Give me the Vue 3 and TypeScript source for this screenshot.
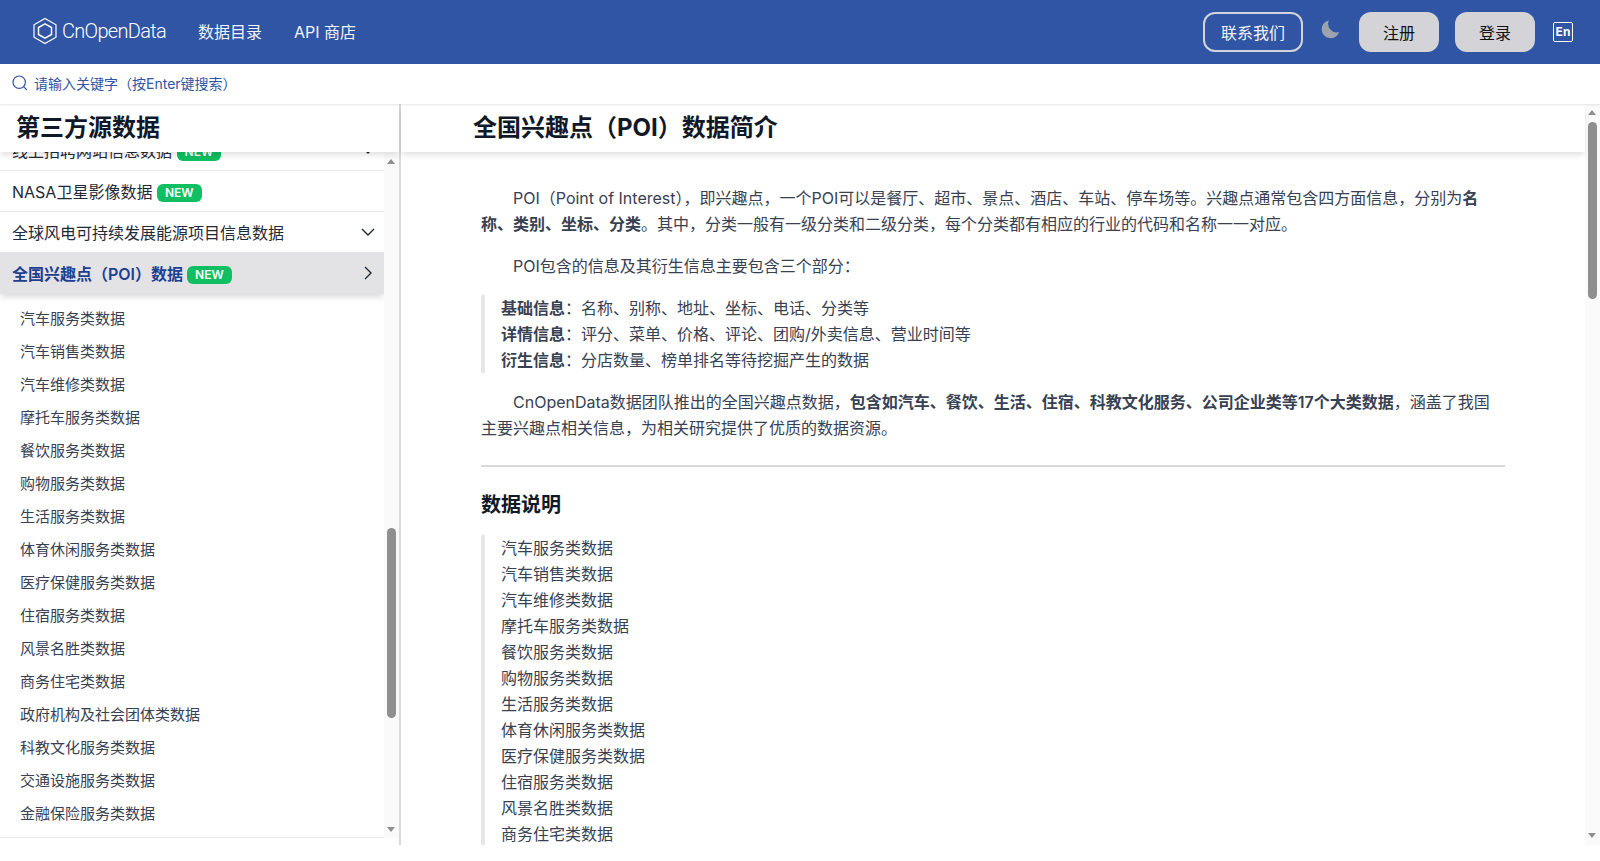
<script setup lang="ts">
const subItems: string[] = [
  '汽车服务类数据', '汽车销售类数据', '汽车维修类数据', '摩托车服务类数据',
  '餐饮服务类数据', '购物服务类数据', '生活服务类数据', '体育休闲服务类数据',
  '医疗保健服务类数据', '住宿服务类数据', '风景名胜类数据', '商务住宅类数据',
  '政府机构及社会团体类数据', '科教文化服务类数据', '交通设施服务类数据', '金融保险服务类数据',
];
const dataList: string[] = subItems.slice(0, 12);
</script>

<template>
  <div class="page">
    <header class="topbar">
      <div class="left">
        <a class="logo">
          <svg viewBox="0 0 24 28" width="24" height="28" fill="none" stroke="currentColor" stroke-width="1.2">
            <path d="M12 1.5 23 7.8v12.4L12 26.5 1 20.2V7.8Z" />
            <path d="M12 6.8 18.5 10.5v7L12 21.2 5.5 17.5v-7Z" stroke-width="1.5" />
          </svg>
          <span>CnOpenData</span>
        </a>
        <a class="nav">数据目录</a>
        <a class="nav">API 商店</a>
      </div>
      <div class="right">
        <button class="contact">联系我们</button>
        <svg class="moon" viewBox="0 0 20 20" width="20" height="20">
          <path fill="#9ca3af" d="M18.2 13.1A8.6 8.6 0 0 1 7.9 1.4a9 9 0 1 0 10.3 11.7Z" />
        </svg>
        <button class="grey">注册</button>
        <button class="grey">登录</button>
        <span class="lang">En</span>
      </div>
    </header>

    <div class="search">
      <svg viewBox="0 0 16 16" width="16" height="16" fill="none" stroke="#2f55a4" stroke-width="1.2" stroke-linecap="round">
        <circle cx="7.2" cy="7.2" r="6.2" />
        <path d="m11.8 11.8 2.8 2.8" />
      </svg>
      <span>请输入关键字（按Enter键搜索）</span>
    </div>

    <div class="body">
      <aside class="side">
        <h2 class="side-title">第三方源数据</h2>
        <div class="side-scroll">
          <ul class="menu">
            <li class="row">
              <span class="label">线上招聘网站信息数据 <em class="tag">NEW</em></span>
              <svg class="chev" viewBox="0 0 16 16" width="16" height="16"><path d="m2 5 6 6 6-6" /></svg>
            </li>
            <li class="row">
              <span class="label">NASA卫星影像数据 <em class="tag">NEW</em></span>
            </li>
            <li class="row">
              <span class="label">全球风电可持续发展能源项目信息数据</span>
              <svg class="chev" viewBox="0 0 16 16" width="16" height="16"><path d="m2 5 6 6 6-6" /></svg>
            </li>
            <li class="row active">
              <span class="label">全国兴趣点（POI）数据 <em class="tag">NEW</em></span>
              <svg class="chev" viewBox="0 0 16 16" width="16" height="16"><path d="m5 2 6 6-6 6" /></svg>
            </li>
            <li class="subs">
              <a v-for="s in subItems" :key="s" class="sub">{{ s }}</a>
            </li>
          </ul>
          <div class="bar">
            <i class="up"></i>
            <i class="thumb side-thumb"></i>
            <i class="down"></i>
          </div>
        </div>
      </aside>

      <main class="main">
        <h2 class="main-title"><span>全国兴趣点（POI）数据简介</span></h2>
        <div class="main-scroll">
          <article class="prose">
            <p class="indent">POI（Point of Interest），即兴趣点，一个POI可以是餐厅、超市、景点、酒店、车站、停车场等。兴趣点通常包含四方面信息，分别为<b>名称、类别、坐标、分类</b>。其中，分类一般有一级分类和二级分类，每个分类都有相应的行业的代码和名称一一对应。</p>
            <p class="indent">POI包含的信息及其衍生信息主要包含三个部分：</p>
            <blockquote>
              <b>基础信息</b>：名称、别称、地址、坐标、电话、分类等<br>
              <b>详情信息</b>：评分、菜单、价格、评论、团购/外卖信息、营业时间等<br>
              <b>衍生信息</b>：分店数量、榜单排名等待挖掘产生的数据
            </blockquote>
            <p class="indent">CnOpenData数据团队推出的全国兴趣点数据，<b>包含如汽车、餐饮、生活、住宿、科教文化服务、公司企业类等17个大类数据</b>，涵盖了我国主要兴趣点相关信息，为相关研究提供了优质的数据资源。</p>
            <hr>
            <h3>数据说明</h3>
            <blockquote>
              <template v-for="d in dataList" :key="d">{{ d }}<br></template>
            </blockquote>
          </article>
          <div class="bar">
            <i class="up"></i>
            <i class="thumb main-thumb"></i>
            <i class="down"></i>
          </div>
        </div>
      </main>
    </div>
  </div>
</template>

<style>
html, body {
  background: #fff;
}
</style>

<style scoped>
.page {
  height: 845px;
  display: flex;
  flex-direction: column;
  overflow: hidden;
  font-family: Inter, "Noto Sans CJK SC", sans-serif;
  color: #1f2937;
}

.topbar {
  height: 64px;
  flex: none;
  background: #2f55a4;
  color: #fff;
  display: flex;
  align-items: center;
  justify-content: space-between;
  padding: 0 27px 0 33px;
}

.left, .right {
  display: flex;
  align-items: center;
}

.left {
  margin-bottom: 2px;
}

.logo {
  display: flex;
  align-items: center;
  gap: 5px;
  font-family: Roboto, sans-serif;
  font-size: 20px;
  font-weight: 300;
  letter-spacing: -.7px;
  margin-right: 32px;
}

.nav {
  font-size: 16px;
  margin-right: 32px;
  color: #f3f4f6;
}

button {
  font-family: inherit;
  font-size: 16px;
  height: 40px;
  border-radius: 12px;
  cursor: pointer;
}

.contact {
  width: 100px;
  background: transparent;
  border: 2px solid #d1d5db;
  color: #f3f4f6;
}

.moon {
  margin: 0 18px 6px 18px;
}

.grey {
  width: 80px;
  background: #d4d4d8;
  border: none;
  color: #111;
  margin-right: 16px;
}

.lang {
  width: 20px;
  height: 20px;
  box-sizing: border-box;
  border: 1px solid #fff;
  border-radius: 2px;
  font-size: 12px;
  font-weight: 700;
  line-height: 18px;
  text-align: center;
  margin-left: 2px;
}

.search {
  height: 40px;
  flex: none;
  display: flex;
  align-items: center;
  gap: 6px;
  padding-left: 12px;
  padding-bottom: 2px;
  box-sizing: border-box;
  font-size: 14px;
  color: #2f55a4;
  box-shadow: 0 1px 2px rgba(0, 0, 0, .1);
  position: relative;
  z-index: 3;
}

.body {
  flex: 1;
  min-height: 0;
  display: flex;
}

.side {
  width: 399px;
  flex: none;
  display: flex;
  flex-direction: column;
  border-right: 2px solid #d9d9dc;
  padding-bottom: 7px;
}

.side-title, .main-title {
  height: 48px;
  flex: none;
  margin: 0;
  font-size: 24px;
  line-height: 48px;
  font-weight: 700;
  color: #111827;
  background: #fff;
  box-shadow: 0 4px 6px -1px rgba(0, 0, 0, .12);
  position: relative;
  z-index: 2;
}

.side-title {
  padding-left: 16px;
}

.main-title {
  padding-left: 72px;
  margin-right: 15px;
}

.side-scroll, .main-scroll {
  flex: 1;
  min-height: 0;
  position: relative;
  overflow: hidden;
}

.menu {
  list-style: none;
  margin: -21.5px 15px 0 0;
  padding: 0;
  font-size: 16px;
}

.row {
  height: 39.5px;
  display: flex;
  align-items: center;
  justify-content: space-between;
  padding: 0 8px 0 12px;
  border-bottom: 1px solid #e5e7eb;
}

.row:nth-child(2) {
  height: 40px;
}

.row:nth-child(3) {
  height: 40px;
}

.label {
  color: #1f2937;
}

.tag {
  display: inline-block;
  font-style: normal;
  font-size: 12px;
  font-weight: 600;
  line-height: 18px;
  padding: 0 8px;
  border-radius: 6px;
  background: #0fbf61;
  color: #fff;
  vertical-align: 1px;
}

.chev {
  fill: none;
  stroke: #1f2937;
  stroke-width: 1.4;
}

.active {
  background: #e3e3e6;
  border-bottom: none;
  box-shadow: 0 4px 6px -1px rgba(0, 0, 0, .15);
  height: 40.5px;
  position: relative;
}

.active .label {
  color: #1e3f8f;
  font-weight: 600;
}

.subs {
  padding: 8.5px 0 7px;
  border-bottom: 1px solid #e5e7eb;
}

.sub {
  display: block;
  height: 33px;
  line-height: 33px;
  padding-left: 20px;
  font-size: 15px;
  color: #374151;
}

.bar {
  position: absolute;
  top: 0;
  right: 0;
  bottom: 0;
  width: 15px;
  background: #fafafa;
}

.bar i {
  position: absolute;
  display: block;
}

.up, .down {
  left: 3px;
  width: 0;
  height: 0;
  border-left: 4.5px solid transparent;
  border-right: 4.5px solid transparent;
}

.up {
  top: 7px;
  border-bottom: 5px solid #8f8f8f;
}

.down {
  bottom: 6px;
  border-top: 5px solid #8f8f8f;
}

.thumb {
  left: 3px;
  width: 9px;
  background: #8f8f8f;
  border-radius: 5px;
}

.side-thumb {
  top: 376px;
  height: 190px;
}

.main-thumb {
  top: 18px;
  height: 177px;
}

.main {
  flex: 1;
  min-width: 0;
  display: flex;
  flex-direction: column;
  position: relative;
}

.main-scroll {
  position: static;
}

.main .up {
  top: 6px;
}

.main .down {
  bottom: 7px;
}

.prose {
  width: 1024px;
  margin-left: 80px;
  padding-top: 33px;
  font-size: 16px;
  line-height: 26px;
  color: #374151;
}

.prose p {
  margin: 0 0 16px;
}

.indent {
  text-indent: 32px;
}

.prose b {
  font-weight: 600;
  color: #374151;
}

blockquote {
  margin: 0 0 16px;
  padding-left: 16px;
  border-left: 4px solid #e5e7eb;
}

hr {
  border: none;
  border-top: 2px solid #d9d9dc;
  margin: 24px 0;
}

h3 {
  margin: 0 0 16px;
  font-size: 20px;
  line-height: 28px;
  font-weight: 600;
  color: #111827;
}
</style>
